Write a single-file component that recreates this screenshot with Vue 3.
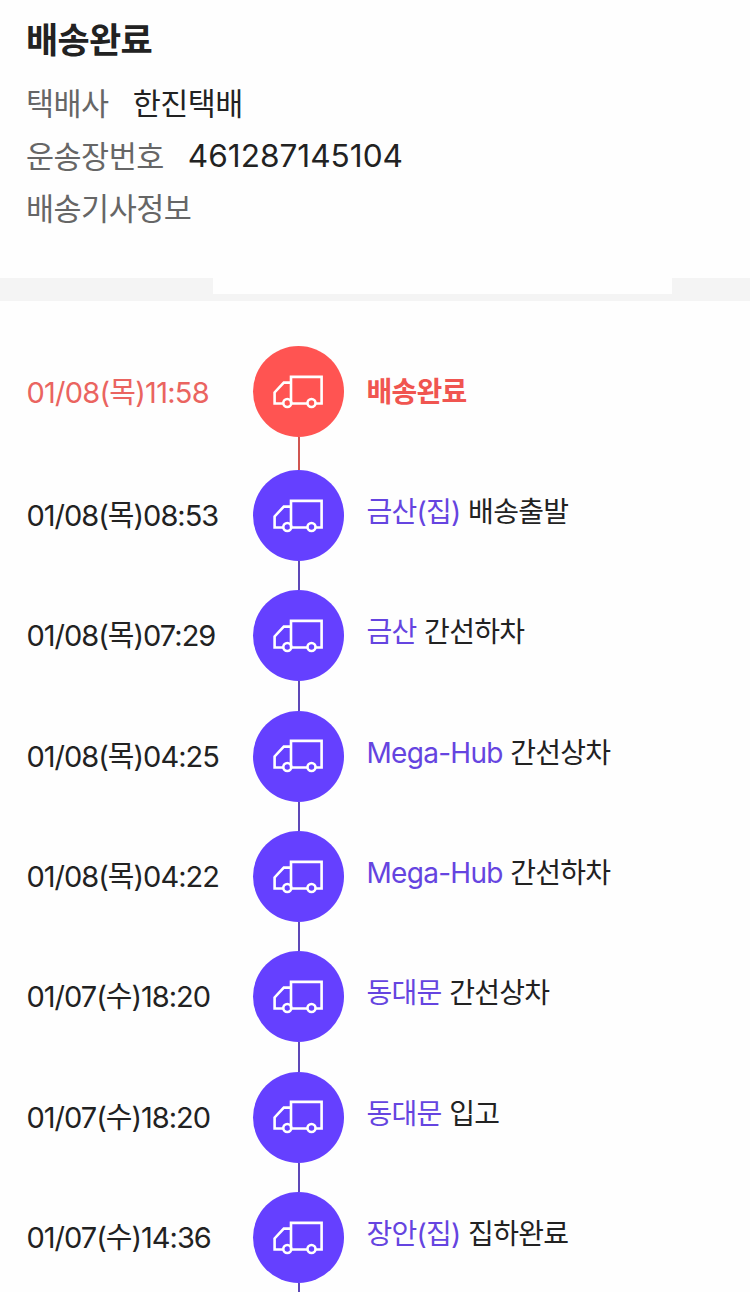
<template>
    <div class="tracking">
        <header class="summary">
            <h1>배송완료</h1>
            <dl>
                <div class="info-row">
                    <dt>택배사</dt>
                    <dd>한진택배</dd>
                </div>
                <div class="info-row">
                    <dt>운송장번호</dt>
                    <dd class="number">461287145104</dd>
                </div>
                <div class="info-row">
                    <dt>배송기사정보</dt>
                </div>
            </dl>
        </header>
        <div class="divider">
            <div class="divider-notch"></div>
        </div>
        <ol class="timeline">
            <li v-for="(step, index) in steps" :key="index" class="step" :class="{ done: step.done }">
                <time class="date">{{ step.date }}({{ step.day }}){{ step.time }}</time>
                <div class="marker">
                    <div class="circle">
                        <svg viewBox="0 0 50 36" fill="none" stroke="currentColor" stroke-width="2.6">
                            <path d="M18 29.5V2.9H48.6V29.5H42.6M34.4 29.5H18.4M18 8.6H10.8L1.6 18.4V29.5H10.2" />
                            <circle cx="14.3" cy="29" r="4" />
                            <circle cx="38.5" cy="29" r="4" />
                        </svg>
                    </div>
                    <div class="line"></div>
                </div>
                <p class="description">
                    <span v-if="step.place" class="place">{{ step.place }}</span>
                    <span>{{ step.status }}</span>
                </p>
            </li>
        </ol>
    </div>
</template>

<script setup>
const steps = [
    { date: '01/08', day: '목', time: '11:58', status: '배송완료', done: true },
    { date: '01/08', day: '목', time: '08:53', place: '금산(집)', status: '배송출발' },
    { date: '01/08', day: '목', time: '07:29', place: '금산', status: '간선하차' },
    { date: '01/08', day: '목', time: '04:25', place: 'Mega-Hub', status: '간선상차' },
    { date: '01/08', day: '목', time: '04:22', place: 'Mega-Hub', status: '간선하차' },
    { date: '01/07', day: '수', time: '18:20', place: '동대문', status: '간선상차' },
    { date: '01/07', day: '수', time: '18:20', place: '동대문', status: '입고' },
    { date: '01/07', day: '수', time: '14:36', place: '장안(집)', status: '집하완료' },
]
</script>

<style>
body {
    margin: 0;
    background: #fefefe;
    overflow: hidden;
}
</style>

<style scoped>
.tracking {
    height: 1292px;
    overflow: hidden;
    color: #222;
    background: #fefefe;
    font-family: Inter, "Noto Sans CJK KR", sans-serif;
}

.summary {
    box-sizing: border-box;
    height: 278px;
    padding: 15px 26px 0;
}

h1 {
    margin: 0 0 13px;
    font-size: 35px;
    line-height: 50px;
    font-weight: 700;
    letter-spacing: -0.7px;
}

dl {
    margin: 0;
}

.info-row {
    display: flex;
    gap: 24px;
    height: 52.7px;
    font-size: 30.5px;
    line-height: 52px;
    letter-spacing: -0.5px;
}

dt {
    color: #666;
}

dd {
    margin: 0;
}

.number {
    font-size: 31.6px;
    line-height: 50px;
    letter-spacing: 0;
}

.divider {
    height: 23px;
    background: #f4f4f4;
}

.divider-notch {
    width: 459px;
    height: 16px;
    margin-left: 213px;
    background: #fefefe;
}

.timeline {
    margin: 0;
    padding: 45px 0 0 26.5px;
    list-style: none;
}

.step {
    display: flex;
    height: 120.35px;
    color: #222;
}

.step.done {
    height: 124px;
}

.date {
    width: 226.5px;
    font-size: 29px;
    line-height: 91px;
    letter-spacing: -1px;
    white-space: nowrap;
}

.marker {
    display: flex;
    flex-direction: column;
    align-items: center;
    width: 91px;
    color: #6540ff;
}

.circle {
    display: flex;
    align-items: center;
    justify-content: center;
    flex: none;
    width: 91px;
    height: 91px;
    border-radius: 50%;
    background: #6540ff;
}

.circle svg {
    width: 50px;
    height: 36px;
    margin: 0 2px 0 0;
    color: #fff;
}

.line {
    flex: 1;
    width: 2px;
    background: #5d48b8;
}

.description {
    display: flex;
    gap: 7.5px;
    margin: 0 0 0 22.5px;
    font-size: 28px;
    line-height: 84px;
    letter-spacing: -0.72px;
    white-space: nowrap;
}

.place {
    color: #6544e0;
}

.done .date {
    color: #ea6460;
    line-height: 93px;
    letter-spacing: -0.75px;
}

.done .circle {
    background: #ff5452;
}

.done .line {
    background: #d05550;
}

.done .description {
    color: #f05550;
    font-weight: 700;
    line-height: 92px;
}
</style>
